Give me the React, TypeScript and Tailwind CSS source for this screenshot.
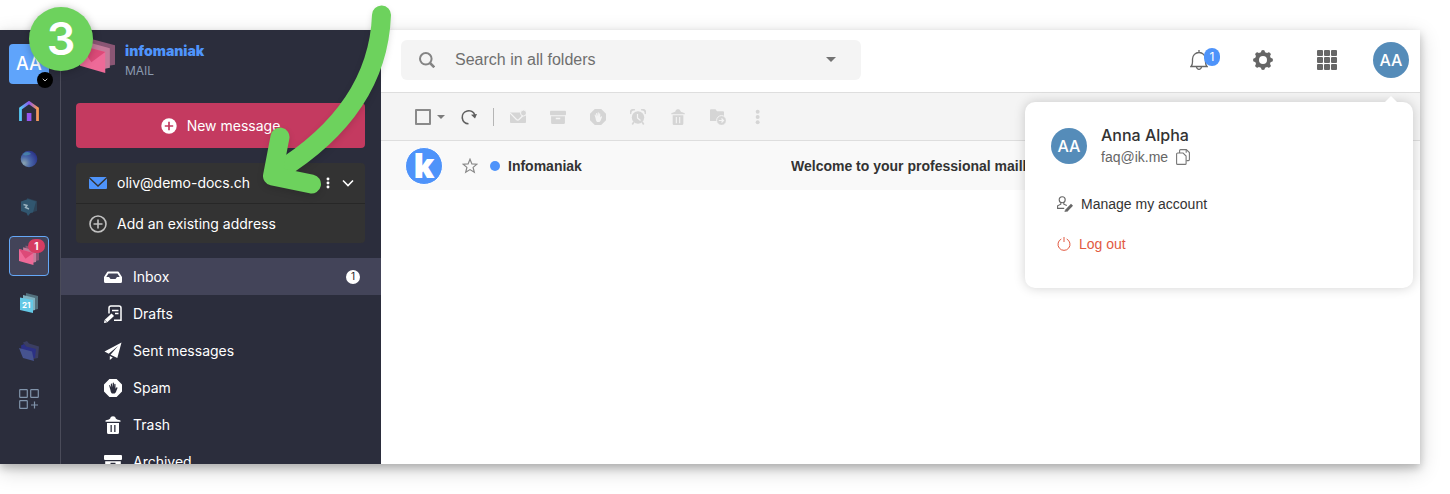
import type { ReactNode } from "react";

type IconProps = { className?: string };

/* ---------- shared glyphs ---------- */

function HandOctagon({ className }: IconProps) {
  return (
    <svg viewBox="0 0 18 18" className={className} aria-hidden="true">
      <path
        fillRule="evenodd"
        fill="currentColor"
        d="M5.4 0h7.2L18 5.4v7.2L12.6 18H5.4L0 12.600V5.400Z M7.900 14.500h2.800c1-.7 1.500-1.700 1.800-2.900l1-2.700c.2-.7-.7-1.100-1.100-.4l-.9 1.200V5.300c0-.8-1.100-.8-1.200 0L10.100 8.200 9.900 4.200c0-.8-1.200-.8-1.200 0L8.600 8.200 7.900 4.900c-.2-.7-1.200-.5-1.100.2l.4 3.500-1-2.200c-.3-.6-1.200-.3-1 .4l1.200 4.200c.2 1.500.6 2.700 1.500 3.500Z"
      />
    </svg>
  );
}

function TrashIcon({ className }: IconProps) {
  return (
    <svg viewBox="0 0 18 18" className={className} aria-hidden="true">
      <path d="M1.500 4.500C3.500 4 5 3.800 6.200 2.600 6.500 1 7.500.300 9 .300s2.500.700 2.800 2.300c1.200 1.200 2.700 1.400 4.700 1.900v1.300h-15Z" fill="currentColor" />
      <path fillRule="evenodd" fill="currentColor" d="M3 7h12v9.500a1.500 1.500 0 0 1-1.500 1.500h-9A1.500 1.500 0 0 1 3 16.500Z M6.500 9v7h1.300V9Z M10.200 9v7h1.300V9Z" />
    </svg>
  );
}

function ArchiveIcon({ className }: IconProps) {
  return (
    <svg viewBox="0 0 18 18" className={className} aria-hidden="true">
      <rect x="0" y="2" width="18" height="5" rx="1" fill="currentColor" />
      <path fillRule="evenodd" fill="currentColor" d="M1.200 8.200h15.600v7.300a1.500 1.500 0 0 1-1.500 1.500H2.700a1.500 1.500 0 0 1-1.500-1.500Z M6.500 9.800v1.700h5V9.800Z" />
    </svg>
  );
}

function MoreIcon({ className }: IconProps) {
  return (
    <svg viewBox="0 0 6 18" className={className} aria-hidden="true" fill="currentColor">
      <circle cx="3" cy="3" r="2.200" />
      <circle cx="3" cy="9" r="2.200" />
      <circle cx="3" cy="15" r="2.200" />
    </svg>
  );
}

function Caret({ className }: IconProps) {
  return (
    <svg viewBox="0 0 10 5" className={className} aria-hidden="true">
      <path d="M0 0h10L5 5Z" fill="currentColor" />
    </svg>
  );
}

function MailStack({ className }: IconProps) {
  return (
    <svg viewBox="0 0 34 34" className={className} aria-hidden="true">
      <path d="M11 1 34 7V26l-6 1L11 22Z" fill="#8a5674" />
      <path d="M7 4 29 10V29l-6 1L7 25Z" fill="#c47b9a" />
      <path d="M0 7 24.500 13.500V34L0 27Z" fill="#ee6a98" />
      <path d="M0 7 24.500 13.500 11 23.500Z" fill="#dc4a78" />
    </svg>
  );
}

/* ---------- app rail ---------- */

function HomeIcon() {
  return (
    <svg viewBox="0 0 20 20" className="size-5" aria-hidden="true">
      <defs>
        <linearGradient id="home" x1="0" x2="1" y1="0" y2="0">
          <stop offset="0" stopColor="#55c9f5" />
          <stop offset=".5" stopColor="#8a58f0" />
          <stop offset="1" stopColor="#f59a57" />
        </linearGradient>
      </defs>
      <path d="M1.500 20V7.500L10 1.500l8.500 6V20" fill="none" stroke="url(#home)" strokeWidth="2.800" />
      <rect x="7.800" y="12" width="4.600" height="8" fill="#9655ee" />
    </svg>
  );
}

function GlobeIcon() {
  return (
    <svg viewBox="0 0 18 18" className="size-[18px]" aria-hidden="true">
      <defs>
        <radialGradient id="globe" cx=".2" cy=".75" r=".85">
          <stop offset="0" stopColor="#8aa3b0" />
          <stop offset=".45" stopColor="#4a68a8" />
          <stop offset="1" stopColor="#2b358a" />
        </radialGradient>
      </defs>
      <circle cx="9" cy="9" r="8.300" fill="url(#globe)" />
      <path d="M4 3c3-2 6-1 7 1-2 1-5 2-8 1Z" fill="#4d9bb0" opacity=".6" />
    </svg>
  );
}

function ChatIcon() {
  return (
    <svg viewBox="0 0 18 18" className="size-[18px]" aria-hidden="true">
      <path d="M7 0 17 3v10l-4 1L7 12Z" fill="#2d4256" />
      <path d="M1 3.500 8 1l8 2.500-3 11-2.500.500L8 18l-1.500-3L1 13Z" fill="#31566f" />
      <path d="m3.500 6.500 3.500 1-1.500 2 3.500 1.500" fill="none" stroke="#9db4c1" strokeWidth="1.400" />
    </svg>
  );
}

function CalendarIcon() {
  return (
    <svg viewBox="0 0 20 20" className="size-5" aria-hidden="true">
      <path d="m7 0 12 3v13l-4 1L7 14Z" fill="#53717e" />
      <path d="m4 2 12 3v12l-4 1-8-2Z" fill="#7fb0bf" />
      <path d="M1 4.500 14 7v13L1 17Z" fill="#64c8e6" />
      <text x="3" y="15" fontSize="8" fontWeight="700" fill="#fff">21</text>
    </svg>
  );
}

function DriveIcon() {
  return (
    <svg viewBox="0 0 20 20" className="size-5" aria-hidden="true">
      <path d="M4 1.500 8 0l2 2.500 10 3L19 17l-5 1Z" fill="#3b3e62" />
      <path d="M2 4.500 5 3l2 2.500L17 8l-1 9-13-2Z" fill="#2c3185" />
      <path d="M0 7 13 10.500 15 20 4 17Z" fill="#46538f" />
    </svg>
  );
}

function AppsPlusIcon() {
  return (
    <svg viewBox="0 0 20 20" className="size-5" aria-hidden="true" fill="none" stroke="#8194ab" strokeWidth="1.200">
      <rect x=".7" y=".7" width="7.600" height="7.600" rx=".6" />
      <rect x="11.700" y=".7" width="7.600" height="7.600" rx=".6" />
      <rect x=".7" y="11.700" width="7.600" height="7.600" rx=".6" />
      <path d="M15.500 12.500v7M12 16h7" />
    </svg>
  );
}

const railItems: { label: string; icon: ReactNode }[] = [
  { label: "Home", icon: <HomeIcon /> },
  { label: "Browser", icon: <GlobeIcon /> },
  { label: "Chat", icon: <ChatIcon /> },
  { label: "Mail", icon: <MailStack className="size-5" /> },
  { label: "Calendar", icon: <CalendarIcon /> },
  { label: "Drive", icon: <DriveIcon /> },
  { label: "More apps", icon: <AppsPlusIcon /> },
];

function AppRail() {
  return (
    <nav aria-label="Apps" className="flex w-[61px] shrink-0 flex-col gap-2 border-r border-[#4a4b59] pt-[14px] pl-[9px]">
      <button aria-label="Organisation" className="relative flex size-10 items-center justify-center rounded bg-[#5fa4fb] text-lg font-medium text-white">
        AA
        <span className="absolute -right-1 -bottom-1 flex size-4 items-center justify-center rounded-full bg-black">
          <svg viewBox="0 0 8 5" className="w-1.5" aria-hidden="true">
            <path d="m1 1 3 3 3-3" fill="none" stroke="#fff" />
          </svg>
        </span>
      </button>
      {railItems.map((item) => (
        <a
          key={item.label}
          href="#"
          aria-label={item.label}
          className={
            item.label === "Mail"
              ? "relative flex size-10 items-center justify-center rounded border border-[#65a8f8] bg-[#434459] pb-0.5"
              : "flex size-10 items-center justify-center pb-0.5"
          }
        >
          {item.icon}
          {item.label === "Mail" && (
            <span className="absolute top-0.5 right-[3px] flex h-[14px] w-[17px] items-center justify-center rounded-full bg-[#d63c62] text-[10px] font-bold text-white">
              1
            </span>
          )}
        </a>
      ))}
    </nav>
  );
}

/* ---------- sidebar ---------- */

const folders: { name: string; icon: ReactNode; count?: number }[] = [
  {
    name: "Inbox",
    count: 1,
    icon: (
      <svg viewBox="0 0 18 18" className="size-[18px]" aria-hidden="true">
        <path
          fillRule="evenodd"
          fill="currentColor"
          d="M4.200 3.500h9.600a1.500 1.500 0 0 1 1.300.9L18 9v4.500a1.500 1.500 0 0 1-1.500 1.500h-15A1.500 1.500 0 0 1 0 13.500V9l2.900-4.600a1.500 1.500 0 0 1 1.300-.9Z M4.500 5.500 2.300 9H5l1.500 2h5L13 9h2.700l-2.200-3.500Z"
        />
      </svg>
    ),
  },
  {
    name: "Drafts",
    icon: (
      <svg viewBox="0 0 18 18" className="size-[18px]" aria-hidden="true" fill="none" stroke="currentColor">
        <path d="M5 8.500V3a2 2 0 0 1 2-2h8a2 2 0 0 1 2 2v12.200h-7" strokeWidth="1.500" />
        <path d="M8 5.500h6.500M11 8.500h3.500" strokeWidth="1.300" />
        <path d="m2 16 6.800-6.300" strokeWidth="3.600" />
        <path d="m0 18 .5-3 2.500 2.500Z" fill="currentColor" stroke="none" />
      </svg>
    ),
  },
  {
    name: "Sent messages",
    icon: (
      <svg viewBox="0 0 18 18" className="size-[18px]" aria-hidden="true" fill="currentColor">
        <path d="M17.500.500.500 9.500l4.200 2.300L14 4 6.500 12.800l6.800 3.200Z" />
        <path d="M5.800 14v4l3-2.600Z" />
      </svg>
    ),
  },
  { name: "Spam", icon: <HandOctagon className="size-[18px]" /> },
  { name: "Trash", icon: <TrashIcon className="size-[18px]" /> },
  { name: "Archived", icon: <ArchiveIcon className="size-[18px]" /> },
];

function Sidebar() {
  return (
    <aside className="flex w-80 shrink-0 flex-col overflow-hidden">
      <div className="flex h-[73px] shrink-0 items-start gap-2.5 pt-2 pl-[19px]">
        <MailStack className="size-[35px]" />
        <div className="flex flex-col pt-1">
          <span className="text-sm leading-[18px] font-black text-[#4f94fb]">infomaniak</span>
          <span className="text-xs leading-[22px] text-[#8b9bb0]">MAIL</span>
        </div>
      </div>

      <button className="mr-4 ml-[15px] flex h-[45px] shrink-0 items-center justify-center gap-2.5 rounded bg-[#c43a60] text-white">
        <svg viewBox="0 0 16 16" className="size-4" aria-hidden="true">
          <circle cx="8" cy="8" r="7.700" fill="#fff" />
          <path d="M8 3.800v8.400M3.800 8h8.400" stroke="#c43a60" strokeWidth="1.700" />
        </svg>
        New message
      </button>

      <div className="my-[15px] mr-4 ml-[15px] shrink-0 overflow-hidden rounded bg-[#333333] text-white">
        <div className="flex h-10 items-center pr-[11px] pl-[13px]">
          <svg viewBox="0 0 18 12" className="mr-2.5 w-[18px]" aria-hidden="true">
            <rect width="18" height="12" rx="1" fill="#4e93fa" />
            <path d="m0 .5 9 8.500 9-8.500" fill="none" stroke="#333" strokeWidth="1.300" />
          </svg>
          <span className="flex-1">oliv@demo-docs.ch</span>
          <button aria-label="Address options" className="mr-3">
            <MoreIcon className="h-3" />
          </button>
          <button aria-label="Show addresses">
            <svg viewBox="0 0 12 8" className="w-3" aria-hidden="true">
              <path d="m1 1.500 5 5 5-5" fill="none" stroke="currentColor" strokeWidth="1.600" />
            </svg>
          </button>
        </div>
        <button className="flex h-10 w-full items-center gap-2.5 border-t border-[#272727] pl-[13px]">
          <svg viewBox="0 0 18 18" className="size-[18px]" aria-hidden="true" fill="none" stroke="#c2c2c2" strokeWidth="1.600">
            <circle cx="9" cy="9" r="8" />
            <path d="M9 4.500v9M4.500 9h9" />
          </svg>
          Add an existing address
        </button>
      </div>

      <nav aria-label="Folders" className="flex flex-col text-white">
        {folders.map((folder) => (
          <a
            key={folder.name}
            href="#"
            className={
              folder.count
                ? "flex h-[37px] shrink-0 items-center gap-[11px] bg-[#434459] pr-[21px] pl-[43px]"
                : "flex h-[37px] shrink-0 items-center gap-[11px] pr-[21px] pl-[43px]"
            }
          >
            {folder.icon}
            <span className="flex-1">{folder.name}</span>
            {folder.count && (
              <span className="flex size-[14px] items-center justify-center rounded-full bg-white text-[10px] text-[#222]">
                {folder.count}
              </span>
            )}
          </a>
        ))}
      </nav>
    </aside>
  );
}

/* ---------- top bar ---------- */

function TopBar() {
  return (
    <header className="flex h-[63px] shrink-0 items-center justify-between border-b border-[#dedede] pr-[11px] pb-[3px] pl-5">
      <div className="flex h-10 w-[460px] items-center rounded-md bg-[#f4f4f4] pr-[25px] pl-[18px]">
        <svg viewBox="0 0 16 16" className="size-4" aria-hidden="true" fill="none" stroke="#848484" strokeWidth="2">
          <circle cx="6.800" cy="6.800" r="5.800" />
          <path d="m11 11 4.300 4.300" strokeWidth="2.600" />
        </svg>
        <input
          aria-label="Search"
          placeholder="Search in all folders"
          className="ml-5 min-w-0 flex-1 bg-transparent font-['Liberation_Sans',sans-serif] text-base outline-none placeholder:text-[#6f6f6f]"
        />
        <button aria-label="Search filters">
          <Caret className="w-2.5 text-[#737373]" />
        </button>
      </div>

      <div className="flex items-center gap-7 text-[#666]">
        <button aria-label="Notifications" className="relative flex size-9 items-center justify-center">
          <svg viewBox="0 0 18 20" className="h-5" aria-hidden="true" fill="none" stroke="currentColor" strokeWidth="1.300">
            <path d="M9 0v2.200M1 16.500c1-1 1.500-2 1.500-4.500V9a6.500 6.500 0 0 1 13 0v3c0 2.500.5 3.500 1.500 4.500Z" />
            <path d="M6.500 17c.3 1.600 1.200 2.300 2.500 2.300s2.200-.7 2.500-2.300" />
          </svg>
          <span className="absolute top-1.5 -right-[3px] flex h-[18px] w-4 items-center justify-center rounded-full bg-[#4e93fa] text-xs text-white">
            1
          </span>
        </button>
        <button aria-label="Settings" className="flex size-9 items-center justify-center">
          <svg viewBox="0 0 20 20" className="size-5" aria-hidden="true">
            <circle cx="10" cy="10" r="6" fill="none" stroke="currentColor" strokeWidth="4" />
            <g stroke="currentColor" strokeWidth="4" strokeLinecap="round">
              <path d="M10 2v1M10 17v1M2 10h1M17 10h1M4.300 4.300l.7.700M15 15l.7.700M15.700 4.300l-.7.700M5 15l-.7.700" />
            </g>
          </svg>
        </button>
        <button aria-label="Applications" className="flex size-9 items-center justify-center">
          <svg viewBox="0 0 20 20" className="size-5" aria-hidden="true" fill="currentColor">
            {[0, 7, 14].map((y) => [0, 7, 14].map((x) => <rect key={`${x}-${y}`} x={x} y={y} width="6" height="6" rx="1" />))}
          </svg>
        </button>
        <button aria-label="Account" className="flex size-9 items-center justify-center rounded-full bg-[#558cb9] text-base font-medium text-white">
          AA
        </button>
      </div>
    </header>
  );
}

/* ---------- toolbar ---------- */

const actions: { label: string; icon: ReactNode }[] = [
  {
    label: "Mark as unread",
    icon: (
      <svg viewBox="0 0 16 16" className="size-4" aria-hidden="true">
        <path d="M0 3.500h16V13a1 1 0 0 1-1 1H1a1 1 0 0 1-1-1Z" fill="currentColor" />
        <path d="m0 4 6.500 6.500c.8.700 1.700.7 2.500 0L14 5.500" fill="none" stroke="#f4f4f4" strokeWidth="1.200" />
        <circle cx="13.500" cy="4" r="3" fill="currentColor" stroke="#f4f4f4" />
      </svg>
    ),
  },
  { label: "Archive", icon: <ArchiveIcon className="size-4" /> },
  { label: "Spam", icon: <HandOctagon className="size-4" /> },
  {
    label: "Snooze",
    icon: (
      <svg viewBox="0 0 16 16" className="size-4" aria-hidden="true">
        <circle cx="8" cy="8.500" r="6.200" fill="currentColor" />
        <path d="M.800 4.800A3 3 0 0 1 4.800.900M15.200 4.800A3 3 0 0 0 11.200.900" fill="none" stroke="currentColor" strokeWidth="1.800" />
        <path d="m3.800 13-1.500 2.500M12.200 13l1.500 2.500" stroke="currentColor" strokeWidth="1.600" />
        <path d="M7.500 5v4l3 2.500" fill="none" stroke="#f4f4f4" strokeWidth="1.200" />
      </svg>
    ),
  },
  { label: "Delete", icon: <TrashIcon className="size-4" /> },
  {
    label: "Move",
    icon: (
      <svg viewBox="0 0 16 16" className="size-4" aria-hidden="true">
        <path d="M0 1.200A1 1 0 0 1 1 .200h4.500L7 2.300h6a1 1 0 0 1 1 1V12H0Z" fill="currentColor" />
        <circle cx="11.500" cy="11.500" r="4.900" fill="currentColor" stroke="#f4f4f4" />
        <path d="M8.800 11.500h4.500m-1.800-2 2 2-2 2" fill="none" stroke="#f4f4f4" strokeWidth="1.200" />
      </svg>
    ),
  },
  { label: "More actions", icon: <MoreIcon className="h-4" /> },
];

function Toolbar() {
  return (
    <div className="flex h-12 shrink-0 items-center border-b border-[#dedede] bg-[#f4f4f4] pl-[34px]">
      <input type="checkbox" aria-label="Select all" className="size-4 appearance-none rounded-[1px] border-2 border-[#8a8a8a]" />
      <button aria-label="Selection options" className="ml-1.5">
        <Caret className="w-2 text-[#7c7c7c]" />
      </button>
      <button aria-label="Refresh" className="ml-4">
        <svg viewBox="0 0 16 16" className="size-4" aria-hidden="true">
          <path d="M7.500 14.800a6.500 6.500 0 1 1 6.300-8.800" fill="none" stroke="#5f5f5f" strokeWidth="1.600" />
          <path d="M10 5.800 16 5l-2 4.500Z" fill="#5f5f5f" />
        </svg>
      </button>
      <span className="mx-4 h-[18px] w-px bg-[#b5b5b5]" />
      <div className="flex gap-6 text-[#d5d5d5]">
        {actions.map((action) => (
          <button key={action.label} aria-label={action.label} className="flex size-4 items-center justify-center">
            {action.icon}
          </button>
        ))}
      </div>
    </div>
  );
}

/* ---------- message list ---------- */

function MessageList() {
  return (
    <ul className="font-['Liberation_Sans',sans-serif]">
      <li className="flex h-[49px] items-center bg-[#f9f9f9] pl-6 font-bold text-[#333]">
        <span aria-hidden="true" className="flex size-[38px] shrink-0 items-start justify-center overflow-hidden rounded-full border border-white bg-[#4e93fa] font-['Inter',sans-serif] text-[34px] leading-9 font-black text-white">
          k
        </span>
        <button aria-label="Add to favourites" className="ml-[19px]">
          <svg viewBox="0 0 16 16" className="size-4" aria-hidden="true">
            <path d="m8 1.200 1.900 4.700 5 .3-3.800 3.200 1.200 4.900L8 11.600l-4.300 2.700 1.200-4.900L1.100 6.200l5-.3Z" fill="none" stroke="#888" strokeWidth="1.200" />
          </svg>
        </button>
        <span className="mr-2 ml-3 size-2.5 rounded-full bg-[#4e93fa]" />
        <span className="w-[283px] shrink-0">Infomaniak</span>
        <span className="truncate">Welcome to your professional mailbox</span>
      </li>
    </ul>
  );
}

/* ---------- account menu ---------- */

function AccountMenu() {
  return (
    <div className="absolute top-[72px] right-[7px] w-[388px] rounded-[10px] bg-white px-[26px] pt-[22px] pb-8 font-['Liberation_Sans',sans-serif] text-[#333] shadow-[0_0_12px_rgba(0,0,0,0.18)]">
      <svg viewBox="0 0 14 7" className="absolute -top-[6px] right-[15px] w-3.5" aria-hidden="true">
        <path d="M0 7 7 0l7 7Z" fill="#fff" />
      </svg>
      <div className="flex items-center gap-3.5">
        <span className="flex size-9 items-center justify-center rounded-full bg-[#558cb9] font-['Inter',sans-serif] text-base font-medium text-white">AA</span>
        <div className="flex flex-col">
          <span className="font-['Inter',sans-serif] text-base leading-[22px] font-medium">Anna Alpha</span>
          <span className="flex items-center gap-2 leading-[22px] text-[#666]">
            faq@ik.me
            <button aria-label="Copy address">
              <svg viewBox="0 0 14 16" className="h-4" aria-hidden="true" fill="none" stroke="#777" strokeWidth="1.100">
                <path d="M3.600 4V1.600a1 1 0 0 1 1-1h5.700l3.100 3v7a1 1 0 0 1-1 1h-2" />
                <path d="M10.200 3.800v-3M.6 5a1 1 0 0 1 1-1h5.500l3 3v7.400a1 1 0 0 1-1 1H1.600a1 1 0 0 1-1-1Z" />
              </svg>
            </button>
          </span>
        </div>
      </div>
      <a href="#" className="mt-6 flex h-6 items-center gap-2 pl-1.5">
        <svg viewBox="0 0 16 16" className="size-4" aria-hidden="true" fill="none" stroke="#666" strokeWidth="1.100">
          <circle cx="5.200" cy="3.700" r="3" />
          <path d="M3.800 6.500v1.700L.6 9.800v2.600h6.600M6.800 6.500v1.700l3 1.400" />
          <path d="m9 15 6-6.200" strokeWidth="2.800" />
          <path d="m7.500 16 .5-2.200 1.700 1.700Z" fill="#666" stroke="none" />
        </svg>
        Manage my account
      </a>
      <a href="#" className="mt-4 flex h-6 items-center gap-2 pl-1.5 text-[#e25a42]">
        <svg viewBox="0 0 14 14" className="size-3.5" aria-hidden="true" fill="none" stroke="currentColor">
          <path d="M4.300 2A6 6 0 1 0 9.700 2M7 0v5" />
        </svg>
        Log out
      </a>
    </div>
  );
}

/* ---------- tutorial markers ---------- */

function StepMarkers() {
  return (
    <>
      <span className="absolute top-[7px] left-[29px] flex size-16 items-center justify-center rounded-full bg-[#6dd25d] text-[45px] font-semibold text-white shadow-[0_1px_8px_rgba(0,0,0,0.25)]">
        3
      </span>
      <svg viewBox="0 0 150 210" className="pointer-events-none absolute top-0 left-[250px] w-[150px] drop-shadow-md" aria-hidden="true">
        <g fill="none" stroke="#6dd25d" strokeWidth="19" strokeLinecap="round" strokeLinejoin="round">
          <path d="M131.500 15C129 80 92 132 27 172" />
          <path d="M30 137 22.500 176 61.500 184" />
        </g>
      </svg>
    </>
  );
}

export default function App() {
  return (
    <div className="relative h-screen overflow-hidden bg-white py-[30px] pr-[30px] font-['Inter',sans-serif] text-sm">
      <div className="relative h-full shadow-[0_4px_8px_rgba(0,0,0,0.2),0_6px_20px_rgba(0,0,0,0.19)]">
        <div className="flex h-full overflow-hidden">
          <div className="flex shrink-0 bg-[#2b2d3c]">
            <AppRail />
            <Sidebar />
          </div>
          <main className="flex min-w-0 flex-1 flex-col bg-white">
            <TopBar />
            <Toolbar />
            <MessageList />
          </main>
        </div>
        <AccountMenu />
      </div>
      <StepMarkers />
    </div>
  );
}
